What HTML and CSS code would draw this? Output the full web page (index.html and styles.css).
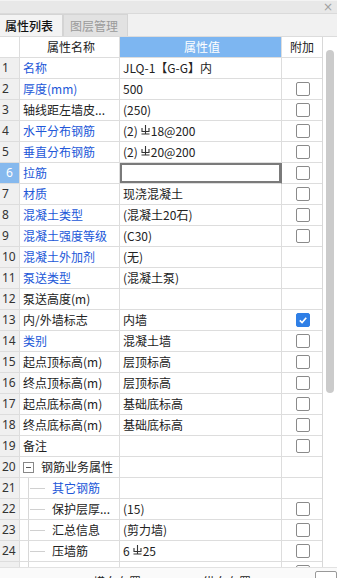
FILE: index.html
```html
<!DOCTYPE html>
<html lang="zh">
<head>
<meta charset="utf-8">
<link rel="stylesheet" href="styles.css">
</head>
<body>
<div class="app">
  <div class="titlebar"><span class="close">×</span></div>
  <div class="tabbar">
    <div class="tab active">属性列表</div>
    <div class="tab">图层管理</div>
  </div>
  <div class="main">
    <div class="grid">
      <div class="row head">
        <div class="c num"></div>
        <div class="c name center">属性名称</div>
        <div class="c val center hv">属性值</div>
        <div class="c add center">附加</div>
      </div>
      <div class="row"><div class="c num">1</div><div class="c name blue">名称</div><div class="c val">JLQ-1【G-G】内</div><div class="c add"></div></div>
      <div class="row"><div class="c num">2</div><div class="c name blue">厚度(mm)</div><div class="c val">500</div><div class="c add"><span class="cb"></span></div></div>
      <div class="row"><div class="c num">3</div><div class="c name">轴线距左墙皮...</div><div class="c val">(250)</div><div class="c add"><span class="cb"></span></div></div>
      <div class="row"><div class="c num">4</div><div class="c name blue">水平分布钢筋</div><div class="c val">(2)<svg class="rb" viewBox="0 0 9 10"><path d="M4.5 0V8.5M1 3V6.5H8V3M0.5 9H8.5"/></svg>18@200</div><div class="c add"><span class="cb"></span></div></div>
      <div class="row"><div class="c num">5</div><div class="c name blue">垂直分布钢筋</div><div class="c val">(2)<svg class="rb" viewBox="0 0 9 10"><path d="M4.5 0V8.5M1 3V6.5H8V3M0.5 9H8.5"/></svg>20@200</div><div class="c add"><span class="cb"></span></div></div>
      <div class="row"><div class="c num sel">6</div><div class="c name blue">拉筋</div><div class="c val edit"></div><div class="c add"><span class="cb"></span></div></div>
      <div class="row"><div class="c num">7</div><div class="c name blue">材质</div><div class="c val">现浇混凝土</div><div class="c add"><span class="cb"></span></div></div>
      <div class="row"><div class="c num">8</div><div class="c name blue">混凝土类型</div><div class="c val">(混凝土20石)</div><div class="c add"><span class="cb"></span></div></div>
      <div class="row"><div class="c num">9</div><div class="c name blue">混凝土强度等级</div><div class="c val">(C30)</div><div class="c add"><span class="cb"></span></div></div>
      <div class="row"><div class="c num">10</div><div class="c name blue">混凝土外加剂</div><div class="c val">(无)</div><div class="c add"></div></div>
      <div class="row"><div class="c num">11</div><div class="c name blue">泵送类型</div><div class="c val">(混凝土泵)</div><div class="c add"></div></div>
      <div class="row"><div class="c num">12</div><div class="c name">泵送高度(m)</div><div class="c val"></div><div class="c add"></div></div>
      <div class="row"><div class="c num">13</div><div class="c name">内/外墙标志</div><div class="c val">内墙</div><div class="c add"><span class="cb on"><svg viewBox="0 0 13 13"><path d="M3 6.8L5.5 9.2L10 4"/></svg></span></div></div>
      <div class="row"><div class="c num">14</div><div class="c name blue">类别</div><div class="c val">混凝土墙</div><div class="c add"><span class="cb"></span></div></div>
      <div class="row"><div class="c num">15</div><div class="c name">起点顶标高(m)</div><div class="c val">层顶标高</div><div class="c add"><span class="cb"></span></div></div>
      <div class="row"><div class="c num">16</div><div class="c name">终点顶标高(m)</div><div class="c val">层顶标高</div><div class="c add"><span class="cb"></span></div></div>
      <div class="row"><div class="c num">17</div><div class="c name">起点底标高(m)</div><div class="c val">基础底标高</div><div class="c add"><span class="cb"></span></div></div>
      <div class="row"><div class="c num">18</div><div class="c name">终点底标高(m)</div><div class="c val">基础底标高</div><div class="c add"><span class="cb"></span></div></div>
      <div class="row"><div class="c num">19</div><div class="c name">备注</div><div class="c val"></div><div class="c add"><span class="cb"></span></div></div>
      <div class="row"><div class="c num">20</div><div class="c name"><span class="exp"></span>钢筋业务属性</div><div class="c val"></div><div class="c add"></div></div>
      <div class="row"><div class="c num">21</div><div class="c name tree"><span class="tl"></span><span class="blue">其它钢筋</span></div><div class="c val"></div><div class="c add"></div></div>
      <div class="row"><div class="c num">22</div><div class="c name tree"><span class="tl"></span>保护层厚...</div><div class="c val">(15)</div><div class="c add"><span class="cb"></span></div></div>
      <div class="row"><div class="c num">23</div><div class="c name tree"><span class="tl"></span>汇总信息</div><div class="c val">(剪力墙)</div><div class="c add"><span class="cb"></span></div></div>
      <div class="row"><div class="c num">24</div><div class="c name tree"><span class="tl"></span>压墙筋</div><div class="c val">6<svg class="rb" viewBox="0 0 9 10"><path d="M4.5 0V8.5M1 3V6.5H8V3M0.5 9H8.5"/></svg>25</div><div class="c add"><span class="cb"></span></div></div>
      <div class="row"><div class="c num"></div><div class="c name tree"></div><div class="c val"></div><div class="c add"><span class="cb"></span></div></div>
    </div>
    <div class="scroll"><div class="thumb"></div></div>
  </div>
  <div class="bottom">
    <span class="bt1">横向布置</span>
    <span class="bt2">纵向布置</span>
    <span class="bbox"></span>
  </div>
</div>
</body>
</html>
```

FILE: styles.css
```css
* { box-sizing: border-box; }
html, body { margin: 0; padding: 0; }
body {
  width: 337px;
  height: 578px;
  overflow: hidden;
  background: #ffffff;
  font-family: "Noto Sans CJK SC", "Noto Sans", sans-serif;
  font-size: 12px;
  color: #222;
}
.app { width: 337px; height: 578px; display: flex; flex-direction: column; }
.titlebar {
  height: 14px;
  background: #e8e8e8;
  border-top: 1px solid #f3f3f3;
  border-bottom: 1px solid #dadada;
  display: flex;
  justify-content: flex-end;
  align-items: center;
}
.close { color: #a0a0a0; font-size: 12px; line-height: 12px; margin-right: 4px; font-family: "DejaVu Sans", sans-serif; }
.tabbar {
  height: 23px;
  background: #f1f1f1;
  display: flex;
  align-items: flex-end;
  border-bottom: 1px solid #dcdcdc;
}
.tab {
  height: 22px;
  line-height: 21px;
  padding: 0 9px 0 6px;
  font-size: 12px;
  color: #9a9a9a;
  background: #e2e2e2;
  border: 1px solid #d4d4d4;
  border-bottom: none;
  width: 65px;
}
.tab.active {
  color: #111;
  background: #f3f3f3;
  border-left: none;
  padding-left: 5px;
  width: 63px;
  font-weight: 500;
}
.main { display: flex; height: 530px; }
.grid { width: 323px; height: 530px; overflow: hidden; border-right: 1px solid #d8d8d8; }
.row {
  display: grid;
  grid-template-columns: 20px 100px 162px 40px;
  height: 21px;
}
.c {
  border-right: 1px solid #dddddd;
  border-bottom: 1px solid #dddddd;
  line-height: 20px;
  white-space: nowrap;
  overflow: hidden;
  display: flex;
  align-items: center;
}
.c.add { border-right: none; justify-content: center; }
.num { background: #f0f0f0; padding-left: 2px; color: #333; font-size: 12px; font-family: "Noto Sans", sans-serif; }
.num.sel { background: #86b9ee; color: #fff; padding-left: 6px; }
.name { padding-left: 3px; }
.val { padding-left: 3px; }
.center { justify-content: center; }
.head .c { color: #222; }
.head .num { background: #fff; }
.head .hv { background: #7db6f1; color: #fff; }
.blue { color: #2257d8; }
.edit { box-shadow: inset 0 0 0 2px #7a7a7a; border-right-color: #7a7a7a; }
.rb { width: 9px; height: 10px; margin: 0 1px 3px 3px; flex: none; }
.rb path { fill: none; stroke: #333; stroke-width: 1.1; }
.cb {
  width: 14px;
  height: 14px;
  border: 1px solid #8a8a8a;
  border-radius: 2px;
  background: #fff;
  display: block;
  margin-left: 1px;
}
.cb.on { background: #2f7fe6; border-color: #2f7fe6; }
.cb.on svg { width: 12px; height: 12px; display: block; }
.cb.on path { fill: none; stroke: #fff; stroke-width: 1.8; }
.exp {
  width: 11px;
  height: 11px;
  border: 1px solid #888;
  margin: 0 7px 0 0;
  position: relative;
  flex: none;
}
.exp::after {
  content: "";
  position: absolute;
  left: 2px;
  top: 4px;
  width: 5px;
  height: 1px;
  background: #555;
}
.tree { padding-left: 8px; position: relative; }
.tree::before {
  content: "";
  position: absolute;
  left: 8px;
  top: 0;
  bottom: 0;
  width: 1px;
  background: #d8d8d8;
}
.tl { width: 15px; height: 1px; background: #d0d0d0; margin: 0 7px 0 2px; flex: none; }
.scroll { width: 14px; height: 530px; position: relative; background: #fff; }
.thumb {
  margin: 13px 0 0 3px;
  width: 8px;
  height: 343px;
  background: #cbcbcb;
  border-radius: 4px;
}
.bottom {
  flex: 1;
  background: #fafafa;
  border-top: 1px solid #e2e2e2;
  position: relative;
  display: flex;
  padding-top: 6px;
  overflow: hidden;
}
.bt1 { margin-left: 93px; line-height: 16px; }
.bt2 { margin-left: 62px; line-height: 16px; }
.bbox {
  position: absolute;
  left: 315px;
  top: 3px;
  width: 22px;
  height: 16px;
  border: 1px solid #999;
  border-radius: 2px;
  background: #fff;
}
```
